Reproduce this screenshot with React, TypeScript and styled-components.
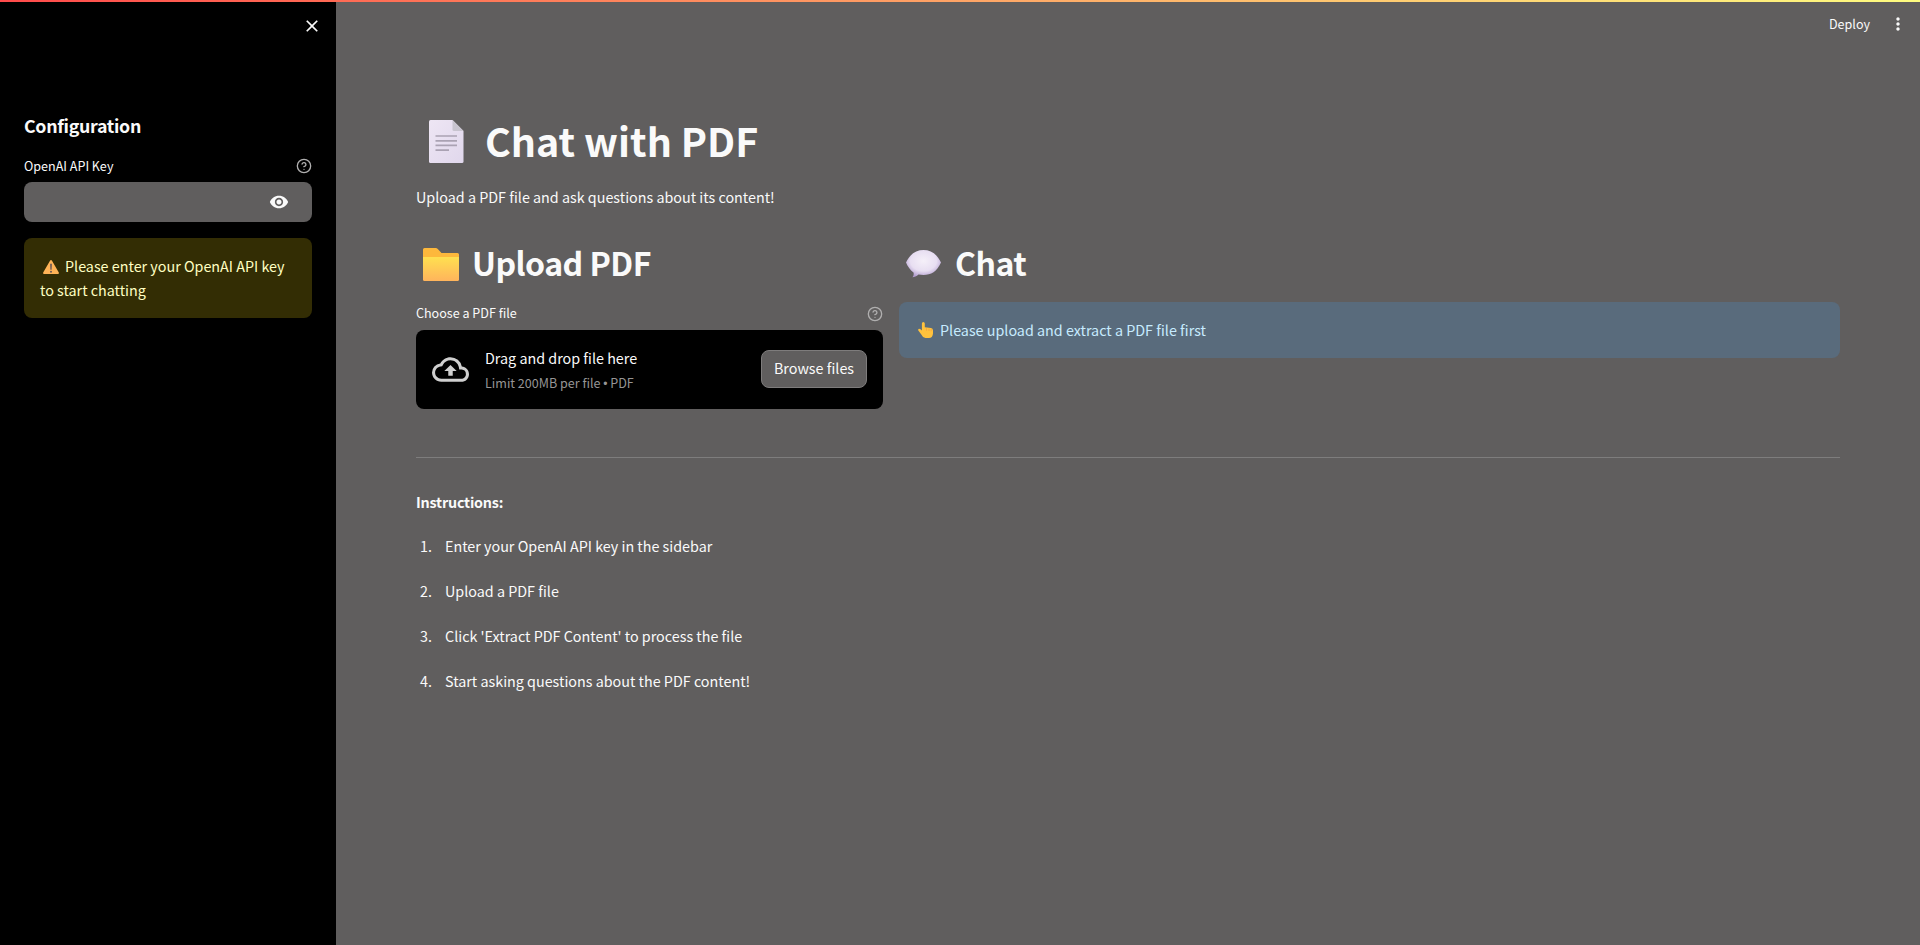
import React from "react";
import styled, { createGlobalStyle } from "styled-components";
import { MdClose, MdMoreVert, MdVisibility, MdOutlineCloudUpload } from "react-icons/md";
import { FiHelpCircle } from "react-icons/fi";

const Global = createGlobalStyle`
  * { box-sizing: border-box; }
  body {
    margin: 0;
    background: #605e5e;
    color: #fafafa;
    font-family: "Source Sans Pro", "Noto Sans CJK SC", sans-serif;
    font-size: 14.33px;
    line-height: 24px;
  }
  h1, h2, h3, p, ol { margin: 0; padding: 0; }
`;

const Shell = styled.div`
  display: grid;
  grid-template-columns: 336px 1fr;
  grid-template-rows: 2px 943px;
`;
const Rainbow = styled.div`
  grid-column: 1 / -1;
  background: linear-gradient(90deg, #ff4b4b, #fffd80);
`;
const Sidebar = styled.aside`
  background: #000;
  padding: 14px 24px 0;
`;
const CloseRow = styled.div`
  display: flex;
  justify-content: flex-end;
  height: 97px;
  margin-right: -10px;
`;
const ConfigTitle = styled.h2`
  margin-bottom: 17px;
  font-size: 17.8px;
  line-height: 24px;
  letter-spacing: -0.3px;
  font-weight: 700;
`;
const LabelRow = styled.div`
  display: flex;
  justify-content: space-between;
  align-items: center;
  height: 24px;
  font-size: 12.55px;
  margin-bottom: 4px;
`;
const LabelText = styled.span<{ $lift?: number }>`
  padding-bottom: ${(p) => p.$lift ?? 0}px;
`;
const Help = styled(FiHelpCircle)`
  color: #b0afaf;
`;
const KeyInput = styled.div`
  display: flex;
  justify-content: flex-end;
  align-items: center;
  height: 40px;
  padding-right: 23px;
  border-radius: 8px;
  background: #605e5e;
  margin-bottom: 16px;
`;
const Alert = styled.div<{ $tone: "warn" | "info" }>`
  padding: 16px;
  border-radius: 8px;
  background: ${(p) => (p.$tone === "warn" ? "#332d04" : "#596b7c")};
  color: ${(p) => (p.$tone === "warn" ? "#ffffc2" : "#c7ebff")};
`;
const Main = styled.main`
  padding: 0 80px;
`;
const Toolbar = styled.header`
  display: flex;
  justify-content: flex-end;
  align-items: center;
  gap: 18px;
  height: 44px;
  margin-right: -68px;
  font-size: 12.55px;
`;
const Title = styled.h1`
  display: flex;
  align-items: center;
  margin-top: 69px;
  height: 53px;
  font-size: 39.4px;
  font-weight: 700;
`;
const HeadingText = styled.span`
  padding-bottom: 4px;
`;
const Lead = styled.p`
  margin-top: 16px;
  height: 26px;
  line-height: 26px;
`;
const Columns = styled.div`
  display: grid;
  grid-template-columns: 467px 941px;
  gap: 16px;
  margin-top: 16px;
`;
const Heading = styled.h2`
  display: flex;
  align-items: center;
  height: 76px;
  font-size: 32.1px;
  letter-spacing: -0.55px;
  font-weight: 600;
`;
const Dropzone = styled.div`
  display: flex;
  align-items: center;
  height: 79px;
  padding: 0 16px 1px;
  border-radius: 8px;
  background: #000;
`;
const CloudIcon = styled(MdOutlineCloudUpload)`
  color: #cfcfcf;
  margin-right: 16px;
`;
const DropText = styled.div`
  flex: 1;
  padding-top: 3px;
`;
const Limit = styled.div`
  margin-top: 1px;
  font-size: 12.55px;
  color: #969595;
`;
const Bullet = styled.span`
  font-family: "Liberation Sans", sans-serif;
  font-size: 12px;
`;
const Browse = styled.button`
  width: 106px;
  height: 38px;
  padding: 0 0 2px;
  border: 1px solid #7e7c7c;
  border-radius: 8px;
  background: #605e5e;
  color: inherit;
  font: inherit;
`;
const Divider = styled.hr`
  height: 1px;
  margin: 48px 0 0;
  border: 0;
  background: #7e7d7d;
`;
const Instructions = styled.p`
  margin-top: 32px;
  font-weight: 700;
  letter-spacing: -0.2px;
`;
const Steps = styled.ol`
  list-style: none;
  margin-top: 9px;
`;
const Step = styled.li`
  display: flex;
  align-items: center;
  height: 45px;
`;
const StepNumber = styled.span`
  width: 29px;
  padding-left: 4px;
`;
const Glyph = styled.svg<{ $before?: number; $after: number; $lift?: number }>`
  flex: none;
  vertical-align: middle;
  margin-left: ${(p) => p.$before ?? 0}px;
  margin-right: ${(p) => p.$after}px;
  margin-bottom: ${(p) => p.$lift ?? 0}px;
`;

const PageGlyph = () => (
  <Glyph $before={13} $after={21} width="35" height="43" viewBox="0 0 35 43">
    <defs>
      <linearGradient id="page" x1="0" y1="0" x2="1" y2="1">
        <stop offset="0" stopColor="#eee6f4" />
        <stop offset="1" stopColor="#e0d7ec" />
      </linearGradient>
    </defs>
    <path d="M1.500 0H23.500L34.500 11V41.500Q34.500 43 33 43H1.500Q0 43 0 41.500V1.500Q0 0 1.500 0Z" fill="url(#page)" />
    <path d="M23.500 0L34.500 11H25Q23.500 11 23.500 9.500Z" fill="#c8c4cf" />
    <path d="M6.500 16H28M6.500 20.800H28M6.500 25.300H28M6.500 30.200H20" stroke="#aaa2b3" strokeWidth="1.700" />
  </Glyph>
);
const FolderGlyph = () => (
  <Glyph $before={7} $after={13} width="36" height="33" viewBox="0 0 36 33">
    <defs>
      <linearGradient id="folder" x1="0" y1="0" x2="0" y2="1">
        <stop offset="0" stopColor="#ffe050" />
        <stop offset="1" stopColor="#ffb45c" />
      </linearGradient>
    </defs>
    <path d="M1.500 0H12.500Q14 0 15 1.200L18.500 5H34.500Q36 5 36 6.500V20H0V1.500Q0 0 1.500 0Z" fill="#fdb83c" />
    <path d="M0 9H36V31.500Q36 33 34.500 33H1.500Q0 33 0 31.500Z" fill="url(#folder)" />
  </Glyph>
);
const BubbleGlyph = () => (
  <Glyph $before={7} $after={14} $lift={1} width="35" height="28" viewBox="0 0 35 28">
    <defs>
      <radialGradient id="bubble" cx=".5" cy=".4" r=".62">
        <stop offset="0" stopColor="#f5f0f9" />
        <stop offset=".6" stopColor="#e8dff2" />
        <stop offset="1" stopColor="#ae98cc" />
      </radialGradient>
    </defs>
    <path d="M17.500 0C25 0 31 4 35 12.500C31 21.500 25 25 17.500 25C15.500 25 14 24.800 12.500 24.500C10.500 26.500 8.500 27 6.500 27.300C7.500 26 8 24 7.500 22.400C4 20.200 1.800 16.500 0 12.500C4 4 10 0 17.500 0Z" fill="url(#bubble)" />
  </Glyph>
);
const WarningGlyph = () => (
  <Glyph $before={3} $after={6} $lift={2} width="16" height="14" viewBox="0 0 16 14">
    <path d="M8 0Q8.600 0 9 .8L15.800 12.600Q16.200 14 15 14H1Q-.2 14 .2 12.600L7 .8Q7.400 0 8 0Z" fill="#ffb357" />
    <path d="M7.200 3.800H8.800L8.600 9.800H7.400Z" fill="#5b5058" />
    <circle cx="8" cy="11.700" r=".95" fill="#5b5058" />
  </Glyph>
);
const HandGlyph = () => (
  <Glyph $before={3} $after={7} $lift={4} width="15" height="16" viewBox="0 0 15 16">
    <path d="M3.900 1.500Q3.900 0 5.300 0T6.800 1.500V5.200L13 6Q15 6.400 15 8.500V11.500Q14.500 16 11 16H7.500Q4.500 15.500 3.300 12.500L.3 8.600Q-.2 7.200 1 6.800Q2.300 6.600 3.900 8.600Z" fill="#ffc23d" />
    <path d="M8.500 6.200V8.800M11 6.500V9M13.200 7V9.300" stroke="#f59b3f" strokeWidth=".7" />
  </Glyph>
);

const steps = [
  "Enter your OpenAI API key in the sidebar",
  "Upload a PDF file",
  "Click 'Extract PDF Content' to process the file",
  "Start asking questions about the PDF content!",
];

export default function App() {
  return (
    <>
      <Global />
      <Shell>
        <Rainbow />
        <Sidebar>
          <CloseRow>
            <MdClose size={20} />
          </CloseRow>
          <ConfigTitle>Configuration</ConfigTitle>
          <LabelRow>
            <LabelText>OpenAI API Key</LabelText>
            <Help size={16} />
          </LabelRow>
          <KeyInput>
            <MdVisibility size={20} />
          </KeyInput>
          <Alert $tone="warn">
            <WarningGlyph />
            Please enter your OpenAI API key to start chatting
          </Alert>
        </Sidebar>
        <Main>
          <Toolbar>
            Deploy
            <MdMoreVert size={20} />
          </Toolbar>
          <Title>
            <PageGlyph />
            <HeadingText>Chat with PDF</HeadingText>
          </Title>
          <Lead>Upload a PDF file and ask questions about its content!</Lead>
          <Columns>
            <section>
              <Heading>
                <FolderGlyph />
                <HeadingText>Upload PDF</HeadingText>
              </Heading>
              <LabelRow>
                <LabelText $lift={2}>Choose a PDF file</LabelText>
                <Help size={16} />
              </LabelRow>
              <Dropzone>
                <CloudIcon size={37} />
                <DropText>
                  <div>Drag and drop file here</div>
                  <Limit>
                    Limit 200MB per file <Bullet>•</Bullet> PDF
                  </Limit>
                </DropText>
                <Browse>Browse files</Browse>
              </Dropzone>
            </section>
            <section>
              <Heading>
                <BubbleGlyph />
                <HeadingText>Chat</HeadingText>
              </Heading>
              <Alert $tone="info">
                <HandGlyph />
                Please upload and extract a PDF file first
              </Alert>
            </section>
          </Columns>
          <Divider />
          <Instructions>Instructions:</Instructions>
          <Steps>
            {steps.map((text, i) => (
              <Step key={text}>
                <StepNumber>{i + 1}.</StepNumber>
                {text}
              </Step>
            ))}
          </Steps>
        </Main>
      </Shell>
    </>
  );
}
